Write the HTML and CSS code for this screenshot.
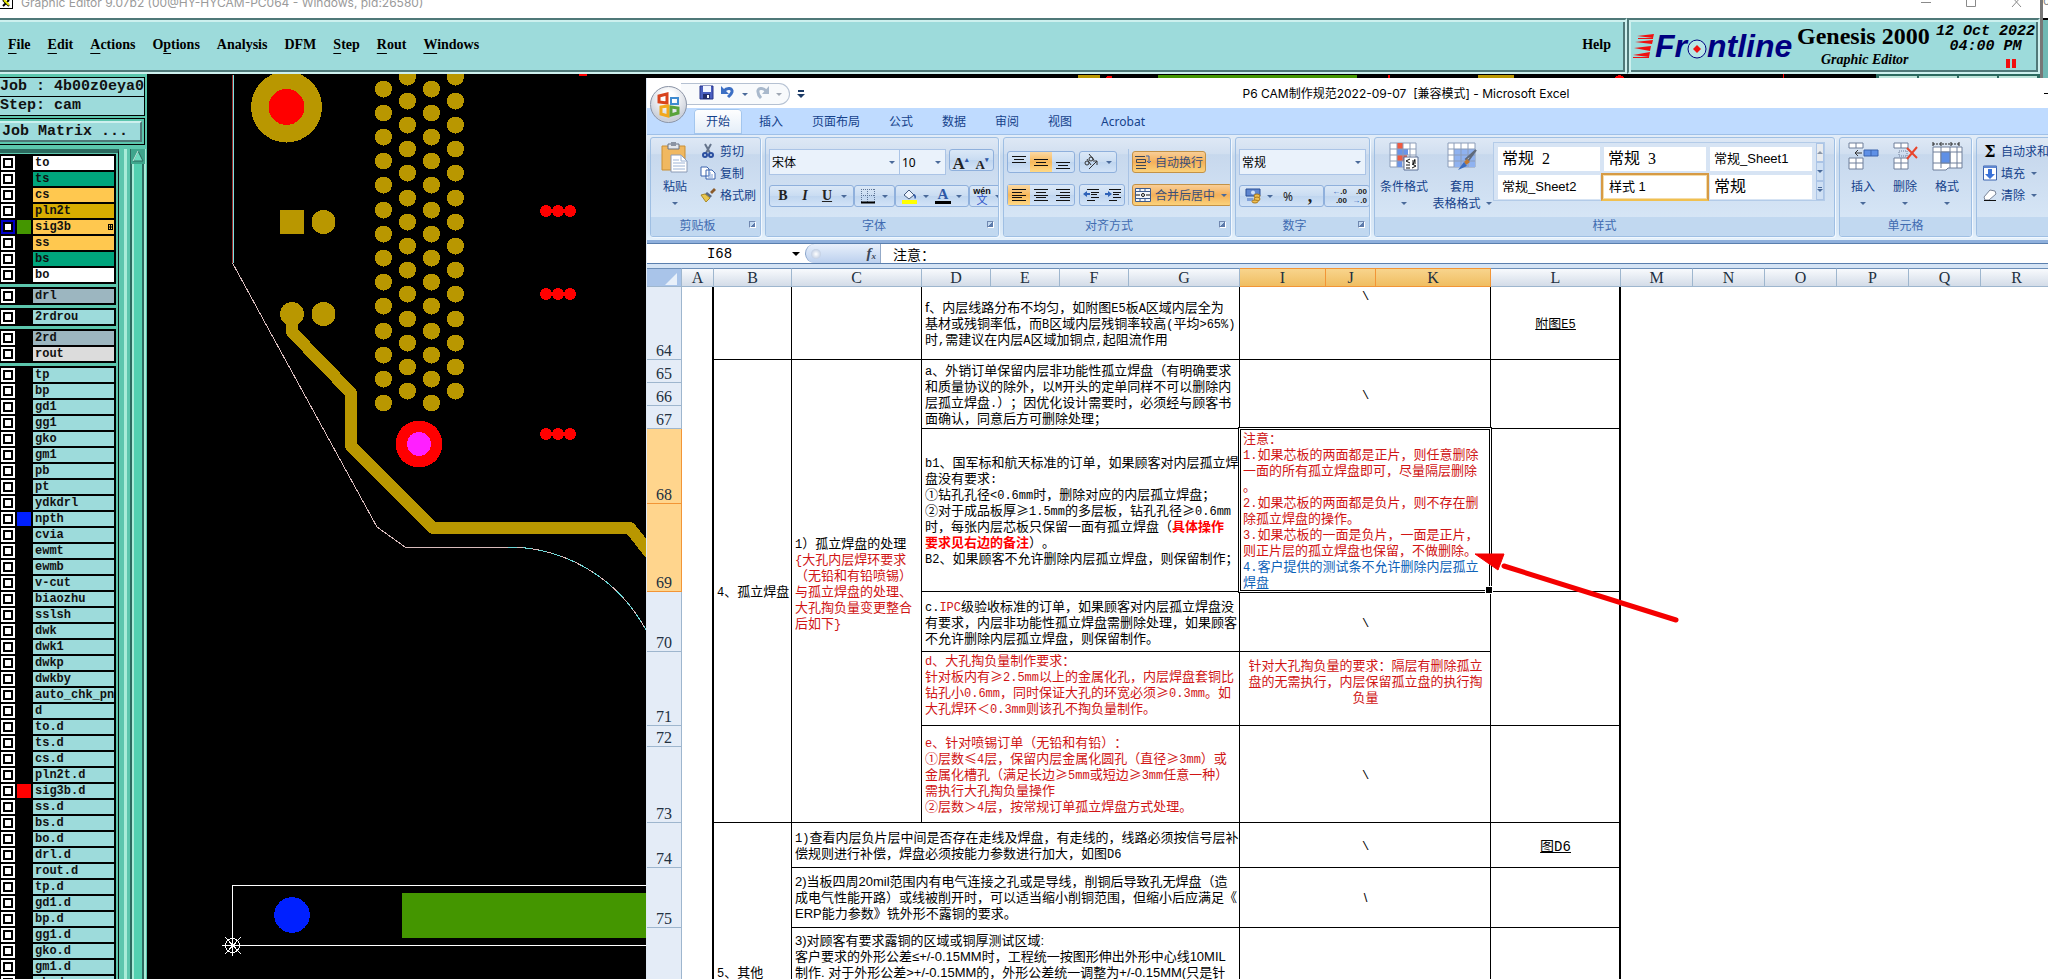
FILE: index.html
```html
<!DOCTYPE html>
<html lang="zh-CN">
<head>
<meta charset="utf-8">
<title>Graphic Editor</title>
<link rel="stylesheet" href="styles.css">
</head>
<body>
<div class="genesis">
  <header class="gtitle">
    <svg class="gicon" width="16" height="18" viewBox="0 0 16 18"><path d="M0 0H13V9H0Z" fill="#fff"/><path d="M0 9H13V0H12V8H0Z" fill="#000"/><path d="M3 0L9 6M9 0L3 6" stroke="#000" stroke-width="2"/><path d="M4 0L9 5" stroke="#e8e800" stroke-width="2"/></svg>
    <span class="gcaption">Graphic Editor 9.07b2 (00@HY-HYCAM-PC064 - Windows, pid:26580)</span>
    <svg class="gctl" width="120" height="18" viewBox="0 0 120 18" fill="none" stroke="#8a8a8a"><path d="M1 2.500H11M46.500 0V6.500H55.500V0M92 7L101 -3M101 7L92 -3"/></svg>
  </header>
  <div class="gbar">
    <nav class="gmenu">
      <a href="#"><u>F</u>ile</a><a href="#"><u>E</u>dit</a><a href="#"><u>A</u>ctions</a><a href="#">O<u>p</u>tions</a><a href="#">Analysis</a><a href="#">DFM</a><a href="#"><u>S</u>tep</a><a href="#"><u>R</u>out</a><a href="#"><u>W</u>indows</a>
      <a href="#" class="help">Help</a>
    </nav>
    <section class="brand">
      <div class="logo">
        <svg width="22" height="26" viewBox="0 0 22 26" fill="#f01010"><path d="M4 3L21 1L20 5ZM2 9L20 7L19 11ZM1 15L18 13L17 18ZM0 22L17 19L16 24ZM5 5H20V6H5ZM0 24H16V25H0Z"/></svg>
        <span class="front">Fr<svg width="20" height="20" viewBox="0 0 20 20"><circle cx="10" cy="10" r="9" fill="#b8e6e6" stroke="#000080"/><path d="M10 6L14 10L10 14L6 10Z" fill="#f01010"/></svg>ntline</span>
      </div>
      <div class="prod"><b>Genesis 2000</b><em>Graphic Editor</em></div>
      <div class="clock"><span>12 Oct 2022</span><span>04:00 PM</span><i></i></div>
    </section>
  </div>
  <div class="gmain">
    <aside class="side">
      <div class="jobs"><div>Job : 4b00z0eya0</div><div>Step: cam</div></div>
      <div class="matrix"><button>Job Matrix ...</button></div>
      <div class="lists">
        <div class="rows">
          <div class="grp">
            <label><input type="checkbox"><i></i><span class="w">to</span></label>
            <label><input type="checkbox"><i></i><span class="g">ts</span></label>
            <label><input type="checkbox"><i></i><span class="o">cs</span></label>
            <label><input type="checkbox"><i></i><span class="y">pln2t</span></label>
            <label><input type="checkbox" class="cur"><i class="green"></i><span class="o">sig3b<svg width="5" height="6" viewBox="0 0 5 6" fill="none" stroke="#000"><path d="M0 .5H5M0 3H5M0 5.500H5M.5 0V6M2.500 0V6M4.500 0V6"/></svg></span></label>
            <label><input type="checkbox"><i></i><span class="o">ss</span></label>
            <label><input type="checkbox"><i></i><span class="g">bs</span></label>
            <label><input type="checkbox"><i></i><span class="w">bo</span></label>
          </div>
          <div class="grp"><label><input type="checkbox"><i></i><span class="b">drl</span></label></div>
          <div class="grp"><label><input type="checkbox"><i></i><span>2rdrou</span></label></div>
          <div class="grp">
            <label><input type="checkbox"><i></i><span class="b">2rd</span></label>
            <label><input type="checkbox"><i></i><span class="l">rout</span></label>
          </div>
          <div class="grp">
            <label><input type="checkbox"><i></i><span>tp</span></label>
            <label><input type="checkbox"><i></i><span>bp</span></label>
            <label><input type="checkbox"><i></i><span>gd1</span></label>
            <label><input type="checkbox"><i></i><span>gg1</span></label>
            <label><input type="checkbox"><i></i><span>gko</span></label>
            <label><input type="checkbox"><i></i><span>gm1</span></label>
            <label><input type="checkbox"><i></i><span>pb</span></label>
            <label><input type="checkbox"><i></i><span>pt</span></label>
            <label><input type="checkbox"><i></i><span>ydkdrl</span></label>
            <label><input type="checkbox"><i class="blue"></i><span>npth</span></label>
            <label><input type="checkbox"><i></i><span>cvia</span></label>
            <label><input type="checkbox"><i></i><span>ewmt</span></label>
            <label><input type="checkbox"><i></i><span>ewmb</span></label>
            <label><input type="checkbox"><i></i><span>v-cut</span></label>
            <label><input type="checkbox"><i></i><span>biaozhu</span></label>
            <label><input type="checkbox"><i></i><span>sslsh</span></label>
            <label><input type="checkbox"><i></i><span>dwk</span></label>
            <label><input type="checkbox"><i></i><span>dwk1</span></label>
            <label><input type="checkbox"><i></i><span>dwkp</span></label>
            <label><input type="checkbox"><i></i><span>dwkby</span></label>
            <label><input type="checkbox"><i></i><span>auto_chk_pnl</span></label>
            <label><input type="checkbox"><i></i><span>d</span></label>
            <label><input type="checkbox"><i></i><span>to.d</span></label>
            <label><input type="checkbox"><i></i><span>ts.d</span></label>
            <label><input type="checkbox"><i></i><span>cs.d</span></label>
            <label><input type="checkbox"><i></i><span>pln2t.d</span></label>
            <label><input type="checkbox"><i class="red"></i><span>sig3b.d</span></label>
            <label><input type="checkbox"><i></i><span>ss.d</span></label>
            <label><input type="checkbox"><i></i><span>bs.d</span></label>
            <label><input type="checkbox"><i></i><span>bo.d</span></label>
            <label><input type="checkbox"><i></i><span>drl.d</span></label>
            <label><input type="checkbox"><i></i><span>rout.d</span></label>
            <label><input type="checkbox"><i></i><span>tp.d</span></label>
            <label><input type="checkbox"><i></i><span>gd1.d</span></label>
            <label><input type="checkbox"><i></i><span>bp.d</span></label>
            <label><input type="checkbox"><i></i><span>gg1.d</span></label>
            <label><input type="checkbox"><i></i><span>gko.d</span></label>
            <label><input type="checkbox"><i></i><span>gm1.d</span></label>
            <label><input type="checkbox"><i></i><span>pb.d</span></label>
          </div>
        </div>
        <div class="rail"><svg width="14" height="15" viewBox="0 0 14 15"><path d="M0 0H14V15H0Z" fill="#3fa58c"/><path d="M7 2L12 12H2Z" fill="#6fdcc0" stroke="#2c6a5f"/><path d="M7 2L2 12" stroke="#c8f5e6"/></svg></div>
      </div>
    </aside>
    <svg class="board" width="100%" height="100%" shape-rendering="crispEdges">
      <defs>
        <g id="col"><circle cy="14" r="8.500"/><circle cy="38" r="8.500"/><circle cy="62" r="8.500"/><circle cy="86" r="8.500"/><circle cy="110" r="8.500"/><circle cy="135" r="8.500"/><circle cy="159" r="8.500"/><circle cy="183" r="8.500"/><circle cy="207" r="8.500"/><circle cy="231" r="8.500"/><circle cy="256" r="8.500"/><circle cy="280" r="8.500"/><circle cy="304" r="8.500"/><circle cy="328" r="8.500"/></g>
        <g id="trio"><circle cx="546" cy="0" r="6"/><circle cx="558" cy="0" r="6"/><circle cx="570" cy="0" r="6"/></g>
      </defs>
      <g transform="translate(-147 -74)">
        <g fill="none">
          <path d="M232 75V263" stroke="#a03030"/><path d="M233 75V263" stroke="#7fe0e0"/>
          <path d="M232.500 263L269 330L377 527L405 547H508A156 156 0 0 1 640 620L650 636" stroke="#d8bcbc"/>
          <path d="M508 547A156 156 0 0 1 640 620L650 636" stroke="#6fd8d8" stroke-dasharray="9 6"/>
        </g>
        <g fill="#b99700">
          <circle cx="286.500" cy="107" r="35.500"/>
          <use href="#col" x="383.500" y="75"/><use href="#col" x="407.500" y="63"/><use href="#col" x="431.500" y="75"/><use href="#col" x="455.500" y="63"/>
          <rect x="280" y="210" width="24" height="24"/>
          <circle cx="323.500" cy="222" r="12"/><circle cx="292" cy="314" r="12"/><circle cx="323.500" cy="314" r="12"/>
        </g>
        <path d="M292 314V332L351 393V446L433 528H630L652 556" fill="none" stroke="#b99700" stroke-width="12" stroke-linejoin="round"/>
        <g fill="#f00">
          <circle cx="286.500" cy="107" r="18"/><circle cx="419" cy="444" r="23.500"/>
          <use href="#trio" y="211"/><use href="#trio" y="294"/><use href="#trio" y="434"/>
          <rect x="579" y="74" width="8" height="2"/>
          <path d="M1615 78A5 5 0 0 1 1624 78ZM1783 74H1784V78H1783ZM1107 76H1112V78H1105ZM1388 75H1390V78H1388Z"/>
        </g>
        <circle cx="419" cy="444" r="12" fill="#ff1fff"/>
        <path d="M1158 75H1357V78H1158ZM402 893H700V938H402Z" fill="#449600"/>
        <path d="M1078 75H1100V78H1078ZM1478 75H1514V78H1478Z" fill="#b99700"/>
        <path d="M1876 74H2040V78H1876Z" fill="#2c6a5f"/><path d="M1879 76H1917V78H1879ZM1919 76H1957V78H1919ZM1959 76H1997V78H1959ZM1999 76H2037V78H1999Z" fill="#bfe6dc"/>
        <circle cx="292" cy="915" r="17.800" fill="#0020ff"/>
        <g fill="none" stroke="#fff"><path d="M232.500 945V885.500H660M242 945.500H660"/><circle cx="232.500" cy="945.500" r="7"/><path d="M222 945.500H243M232.500 935V956M225 937L241 954M241 937L225 954"/></g>
      </g>
    </svg>
  </div>
</div>
<div class="behind"><span>o</span></div>

<main class="excel">
  <div class="xtitle">
    <div class="qat">
      <div class="pill">
        <button aria-label="保存"><svg width="15" height="15" viewBox="0 0 15 15"><path d="M1 1H14V14H1Z" fill="#4a5fc0" stroke="#27348b"/><path d="M4 1H12V7H4Z" fill="#f2f5ff"/><path d="M4 9H11V14H4Z" fill="#222c6b"/><path d="M8 10H10V13H8Z" fill="#fff"/></svg></button>
        <button aria-label="撤消"><svg width="14" height="14" viewBox="0 0 14 14" fill="none"><path d="M3 6C6 2 12 3 11 7C10 10 8 11 7 12" stroke="#3c6fc4" stroke-width="3"/><path d="M0 1V9H8Z" fill="#3c6fc4"/></svg></button>
        <i class="dn"></i>
        <button aria-label="恢复"><svg width="14" height="14" viewBox="0 0 14 14" fill="none"><path d="M11 6C8 2 2 3 3 7C3 10 5 12 6 13" stroke="#a9b9cc" stroke-width="3"/><path d="M14 1V9H7Z" fill="#a9b9cc"/></svg></button>
        <i class="dn pale"></i>
      </div>
      <svg width="8" height="8" viewBox="0 0 8 8" fill="#1d3b66"><path d="M1 0H7V2H1ZM0 4H8L4 8Z"/></svg>
    </div>
    <h1>P6 CAM制作规范2022-09-07&nbsp; [兼容模式] - Microsoft Excel</h1>
    <div class="xctl"><i></i></div>
  </div>
  <button class="office" aria-label="Office 按钮"><svg width="24" height="26" viewBox="0 0 24 26" fill="none" stroke-width="3"><path d="M2 4L10 2V11L2 10Z" stroke="#d8421c"/><path d="M14 6H21V12H14Z" stroke="#3f8bd0" stroke-width="2"/><path d="M4 15L11 14V24L4 22Z" stroke="#f2a81d"/><path d="M14 15L21 16V21L14 23Z" stroke="#5aa33a"/></svg></button>
  <nav class="tabs"><a href="#" class="on">开始</a><a href="#">插入</a><a href="#">页面布局</a><a href="#">公式</a><a href="#">数据</a><a href="#">审阅</a><a href="#">视图</a><a href="#">Acrobat</a></nav>

  <div class="ribbon">
    <section class="rg clip">
      <div class="rb">
        <button class="big"><svg width="28" height="32" viewBox="0 0 28 32"><path d="M1 4H24V28H1Z" fill="#f0b860" stroke="#c98f35"/><path d="M7 2H18V7H7Z" fill="#e4e7ec" stroke="#6a7382"/><path d="M10 0H15V4H10Z" fill="#8a93a3"/><path d="M10 13H20L26 19V30H10Z" fill="#fff" stroke="#8c9bb5"/><path d="M20 13V19H26M12 18H18M12 21H24M12 24H24M12 27H24" fill="none" stroke="#9db4d6"/></svg><span>粘贴</span><i class="dn"></i></button>
        <div class="list">
          <button><svg width="16" height="16" viewBox="0 0 16 16" fill="none"><path d="M5 1L10 10M11 1L6 10" stroke="#66758c" stroke-width="2"/><circle cx="5" cy="12" r="2" stroke="#2b4fa0" stroke-width="2"/><circle cx="11" cy="12" r="2" stroke="#2b4fa0" stroke-width="2"/></svg>剪切</button>
          <button><svg width="16" height="16" viewBox="0 0 16 16" fill="#fff" stroke="#3a62ad"><path d="M1 2H7L9 4V11H1ZM6 5H12L15 8V14H6Z"/><path d="M8 8H11M8 10H13M8 12H13" stroke="#7d9fd8"/></svg>复制</button>
          <button><svg width="16" height="16" viewBox="0 0 16 16"><path d="M10 5L14 1L16 3L12 7Z" fill="#8a5a2a"/><path d="M7 5L12 9L10 11L5 7Z" fill="#5a6a84"/><path d="M5 7L10 11L6 15L1 8Z" fill="#e9c64e" stroke="#a88a2a"/></svg>格式刷</button>
        </div>
      </div>
      <footer class="fl">剪贴板<i class="launch"></i></footer>
    </section>

    <section class="rg font">
      <div class="rb col">
        <div class="ln tall">
          <label class="cb wide"><select aria-label="字体"><option>宋体</option></select></label><label class="cb"><select aria-label="字号"><option>10</option></select></label>
          <div class="seg push top"><button class="ser">A<sup>▴</sup></button><button class="ser sm">A<sup>▾</sup></button></div>
        </div>
        <div class="ln spread">
          <div class="seg"><button class="ser">B</button><button class="ser it">I</button><button class="ser un">U</button><i class="dn"></i></div>
          <div class="seg"><button aria-label="边框"><svg width="16" height="16" viewBox="0 0 16 16" fill="none" stroke="#5d7597"><path d="M1 1.500H15M1 7.500H15M1.500 1V14M7.500 1V14M14.500 1V14" stroke-dasharray="1 1"/><path d="M1 14.500H15" stroke="#000" stroke-width="2"/></svg></button><i class="dn"></i></div>
          <div class="seg"><button aria-label="填充颜色"><svg width="17" height="17" viewBox="0 0 17 17"><path d="M3 7L8 2L13 7L8 11Z" fill="#eef4fc" stroke="#42597d"/><path d="M13 6C16 7 15 11 14 11C13 10 14 8 12 7Z" fill="#2e58a6"/><path d="M1 12H16V16H1Z" fill="#ff0"/></svg></button><i class="dn"></i><button aria-label="字体颜色" class="ser fc">A</button><i class="dn"></i></div>
          <div class="seg"><button class="wen" aria-label="拼音"><small>wén</small><span>文</span></button><i class="dn"></i></div>
        </div>
      </div>
      <footer class="fl">字体<i class="launch"></i></footer>
    </section>

    <section class="rg align">
      <div class="rb two">
        <div class="stack">
          <div class="ln">
            <div class="seg"><button aria-label="顶端对齐"><svg width="14" height="14" viewBox="0 0 14 14"><path d="M0 1.500H14M2 4.500H12M0 7.500H14" stroke="#111"/></svg></button><button class="hot" aria-label="垂直居中"><svg width="14" height="14" viewBox="0 0 14 14"><path d="M0 4.500H14M2 7.500H12M0 10.500H14" stroke="#111"/></svg></button><button aria-label="底端对齐"><svg width="14" height="14" viewBox="0 0 14 14"><path d="M0 7.500H14M2 10.500H12M0 13.500H14" stroke="#111"/></svg></button></div>
            <div class="seg"><button aria-label="方向"><svg width="16" height="16" viewBox="0 0 16 16" fill="none" stroke="#333"><circle cx="4" cy="9" r="2"/><path d="M4 5L8 11"/><circle cx="8" cy="5" r="2"/><path d="M6 0L11 6M6 15L14 7M14 11V7H10"/></svg></button><i class="dn"></i></div>
          </div>
          <div class="ln">
            <div class="seg"><button class="hot" aria-label="左对齐"><svg width="14" height="12" viewBox="0 0 14 12"><path d="M0 .5H14M0 3.500H10M0 6.500H14M0 8.500H10M0 11.500H14" stroke="#111"/></svg></button><button aria-label="居中"><svg width="14" height="12" viewBox="0 0 14 12"><path d="M0 .5H14M2 3.500H12M0 6.500H14M2 8.500H12M0 11.500H14" stroke="#111"/></svg></button><button aria-label="右对齐"><svg width="14" height="12" viewBox="0 0 14 12"><path d="M0 .5H14M4 3.500H14M0 6.500H14M4 8.500H14M0 11.500H14" stroke="#111"/></svg></button></div>
            <div class="seg"><button aria-label="减少缩进"><svg width="16" height="14" viewBox="0 0 16 14"><path d="M4 1.500H16M8 4.500H16M8 6.500H14M8 9.500H16M4 12.500H12" stroke="#111"/><path d="M0 6L4 3V5H7V7H4V9Z" fill="#2e62b8"/></svg></button><button aria-label="增加缩进"><svg width="16" height="14" viewBox="0 0 16 14"><path d="M4 1.500H16M8 4.500H16M8 6.500H14M8 9.500H16M4 12.500H12" stroke="#111"/><path d="M7 6L3 3V5H0V7H3V9Z" fill="#2e62b8"/></svg></button></div>
          </div>
        </div>
        <div class="stack tight">
          <button class="hotbtn"><svg width="16" height="16" viewBox="0 0 16 16" fill="none" stroke="#3c4656"><path d="M0 2.500H10M1.500 5.500H10.500V8.500H1.500ZM1 11.500H11M1 14.500H11"/><path d="M11 2H14V9L12 7M14 9L16 7" stroke="#3a62ad"/></svg>自动换行</button>
          <button class="hotbtn"><svg width="16" height="16" viewBox="0 0 16 16"><path d="M.5 1.500H15.500V14.500H.5ZM.5 4.500H15.500M.5 11.500H15.500M5 1V5M10 1V5M5 11V15M10 11V15" fill="#f4f7fb" stroke="#3c5a8c"/><path d="M1 8H5M11 8H15" stroke="#111"/><circle cx="8" cy="8" r="1.500" fill="none" stroke="#111"/></svg>合并后居中<i class="dn"></i></button>
        </div>
      </div>
      <footer class="fl">对齐方式<i class="launch"></i></footer>
    </section>

    <section class="rg num">
      <div class="rb col">
        <div class="ln tall"><label class="cb wide"><select aria-label="数字格式"><option>常规</option></select></label></div>
        <div class="ln spread">
          <div class="seg"><button aria-label="会计数字格式"><svg width="17" height="16" viewBox="0 0 17 16"><path d="M1 1H15V8H1Z" fill="#5f86cf" stroke="#2b4f95"/><circle cx="8" cy="4.500" r="2" fill="#cfe0fa"/><path d="M2 10H8V13H2Z" fill="#7fa0d8"/><ellipse cx="12" cy="8" rx="3" ry="2" fill="#f0c050" stroke="#a87820"/><ellipse cx="12" cy="11" rx="3" ry="2" fill="#f0c050" stroke="#a87820"/><ellipse cx="10" cy="13.500" rx="3" ry="1.500" fill="#f0c050" stroke="#a87820"/></svg></button><i class="dn"></i><button class="pc">%</button><button class="ser comma">,</button></div>
          <div class="seg"><button class="dec"><span><b>←</b>.0</span><span>.00</span></button><button class="dec"><span>.00</span><span><b>→</b>.0</span></button></div>
        </div>
      </div>
      <footer class="fl">数字<i class="launch"></i></footer>
    </section>

    <section class="rg styles">
      <div class="rb">
        <button class="big"><svg width="32" height="29" viewBox="0 0 32 29"><path d="M2 1H28V25H2Z" fill="#fff" stroke="#8b9cb8"/><path d="M9 1H15V7H9ZM9 13H19V19H9Z" fill="#f05a40"/><path d="M9 7H20V13H9ZM9 19H14V25H9Z" fill="#6a94e8"/><path d="M2 7H28M2 13H28M2 19H28M9 1V25M15 1V25M22 1V25" stroke="#8b9cb8" fill="none"/><path d="M16 15H30V28H16Z" fill="#fff" stroke="#5b6f94"/><path d="M22 17L18 19L22 21M24 19H28M24 21H28M27 17L25 23M18 23H22M18 26H22M24 22L28 24L24 26" stroke="#111" fill="none"/></svg><span>条件格式</span><i class="dn"></i></button>
        <button class="big"><svg width="32" height="29" viewBox="0 0 32 29"><path d="M2 1H29V25H2Z" fill="#fff" stroke="#8b9cb8"/><path d="M8 7H29V25H8Z" fill="#8fb2f0"/><path d="M2 7H29M2 13H29M2 19H29M8 1V25M15 1V25M22 1V25" stroke="#8b9cb8" fill="none"/><path d="M30 8L22 19L20 17Z" fill="#fff" stroke="#5f6a7c" stroke-width="2"/><path d="M21 17L24 20L20 23L18 20Z" fill="#c07830"/><path d="M18 20L21 24L12 28Z" fill="#3a6cc0"/></svg><span>套用<br>表格格式<i class="dn"></i></span></button>
        <div class="gallery">
          <button class="s16">常规&nbsp; 2</button><button class="s16">常规&nbsp; 3</button><button>常规_Sheet1</button>
          <button>常规_Sheet2</button><button class="sel">样式 1</button><button class="s16">常规</button>
          <div class="gs"><button aria-label="上一行"><i class="up"></i></button><button aria-label="下一行"><i class="dn"></i></button><button aria-label="其他"><i class="dn more"></i></button></div>
        </div>
      </div>
      <footer>样式</footer>
    </section>

    <section class="rg cells">
      <div class="rb">
        <button class="big"><svg width="32" height="29" viewBox="0 0 32 29" fill="#fff" stroke="#6f7f9a"><path d="M2 1H16V6H2ZM2 16H16V27H2ZM2 21H16M9 1V6M9 16V27"/><path d="M17 8H31V14H17Z" fill="#5f90e6" stroke="#3a62ad"/><path d="M24 8V14" stroke="#3a62ad"/><path d="M15 11H8M11 8L8 11L11 14" fill="none" stroke="#333"/></svg><span>插入</span><i class="dn"></i></button>
        <button class="big"><svg width="32" height="29" viewBox="0 0 32 29" fill="#fff" stroke="#6f7f9a"><path d="M5 1H19V6H5ZM5 16H19V27H5ZM5 21H19M12 1V6M12 16V27"/><path d="M10 9H18V14H10Z" fill="none" stroke-dasharray="1 1"/><path d="M18 6L28 16M28 5L18 17" stroke="#e8452c" stroke-width="2"/></svg><span>删除</span><i class="dn"></i></button>
        <button class="big"><svg width="32" height="29" viewBox="0 0 32 29" fill="#fff" stroke="#6f7f9a"><path d="M2 2H28" stroke="#222" stroke-dasharray="2 1"/><path d="M2 0V4M28 0V4M10 0V4M20 0V4" stroke="#222"/><path d="M2 5H31V26H17L15 28H2ZM2 10H31M2 21H31M10 5V26M19 5V26M26 5V26"/><path d="M10 10H19V21H10Z" fill="#5f90e6"/></svg><span>格式</span><i class="dn"></i></button>
      </div>
      <footer>单元格</footer>
    </section>

    <section class="rg edit">
      <div class="rb">
        <div class="list">
          <button><b class="sigma">Σ</b>自动求和</button>
          <button><svg width="14" height="16" viewBox="0 0 14 16"><path d="M.5 1H13.500V15H.5Z" fill="#fff" stroke="#3a62ad"/><path d="M.5 1H13.500V3H.5Z" fill="#5f86cf"/><path d="M5 4H9V9H12L7 14L2 9H5Z" fill="#3a72d8"/></svg>填充<i class="dn"></i></button>
          <button><svg width="14" height="14" viewBox="0 0 14 14"><path d="M1 9L7 2L12 3L13 6L6 12L2 12Z" fill="#fff" stroke="#7a8598"/><path d="M1 12.500H13" stroke="#111"/></svg>清除<i class="dn"></i></button>
        </div>
      </div>
      <footer></footer>
    </section>
  </div>

  <div class="fbar">
    <input class="nbox" aria-label="名称框" value="I68">
    <i class="dn blk"></i>
    <div class="fx"><i></i><em>f<sub>x</sub></em></div>
    <input class="fin" aria-label="编辑栏" value="注意：">
  </div>

  <div class="sheet">
    <table>
      <colgroup><col class="c0"><col class="ca"><col class="cbb"><col class="cc"><col class="cd"><col class="cd"><col class="cd"><col class="cg"><col class="ci"><col class="cj"><col class="ck"><col class="cc"><col class="cm"><col class="cm"><col class="cm"><col class="cm"><col class="cm"><col class="cm"></colgroup>
      <thead><tr><th class="corner"><i></i></th><th>A</th><th>B</th><th>C</th><th>D</th><th>E</th><th>F</th><th>G</th><th class="act">I</th><th class="act">J</th><th class="act">K</th><th>L</th><th>M</th><th>N</th><th>O</th><th>P</th><th>Q</th><th>R</th></tr></thead>
      <tbody>
        <tr class="h73"><th>64</th><td class="a"></td><td></td><td></td>
          <td colspan="4">f、内层线路分布不均匀，如附图<s>E5</s>板<s>A</s>区域内层全为<br>基材或残铜率低，而<s>B</s>区域内层残铜率较高<s>(</s>平均<s>&gt;65%)</s><br>时<s>,</s>需建议在内层<s>A</s>区域加铜点<s>,</s>起阻流作用</td>
          <td colspan="3" class="mid topv"><s>\</s></td><td class="mid last"><u>附图<s>E5</s></u></td><td class="out" colspan="6"></td></tr>
        <tr class="h23"><th>65</th><td class="a"></td><td rowspan="9" class="mid"><s>4</s>、孤立焊盘</td>
          <td rowspan="9"><s>1</s>）孤立焊盘的处理<br><span class="r"><s>{</s>大孔内层焊环要求<br>（无铅和有铅喷锡）<br>与孤立焊盘的处理、<br>大孔掏负量变更整合<br>后如下<s>}</s></span><br><br></td>
          <td colspan="4" rowspan="3"><s>a</s>、外销订单保留内层非功能性孤立焊盘（有明确要求<br>和质量协议的除外，以<s>M</s>开头的定单同样不可以删除内<br>层孤立焊盘<s>.</s>）；因优化设计需要时，必须经与顾客书<br>面确认，同意后方可删除处理；</td>
          <td colspan="3" rowspan="3" class="mid"><s>\</s></td><td rowspan="3" class="last"></td><td class="out" colspan="6"></td></tr>
        <tr class="h23"><th>66</th><td class="a"></td><td class="out" colspan="6"></td></tr>
        <tr class="h23"><th>67</th><td class="a"></td><td class="out" colspan="6"></td></tr>
        <tr class="h75"><th class="act">68</th><td class="a"></td>
          <td colspan="4" rowspan="2"><s>b1</s>、国军标和航天标准的订单，如果顾客对内层孤立焊<br>盘没有要求<s>:</s><br>①钻孔孔径<s>&lt;0.6mm</s>时，删除对应的内层孤立焊盘；<br>②对于成品板厚≥<s>1.5mm</s>的多层板，钻孔孔径≥<s>0.6mm</s><br>时，每张内层芯板只保留一面有孤立焊盘（<b>具体操作<br>要求见右边的备注</b>）。<br><s>B2</s>、如果顾客不允许删除内层孤立焊盘，则保留制作；</td>
          <td colspan="3" rowspan="2" class="r picked">注意：<br><s>1.</s>如果芯板的两面都是正片，则任意删除<br>一面的所有孤立焊盘即可，尽量隔层删除<br>。<br><s>2.</s>如果芯板的两面都是负片，则不存在删<br>除孤立焊盘的操作。<br><s>3.</s>如果芯板的一面是负片，一面是正片，<br>则正片层的孤立焊盘也保留，不做删除。<br><span class="bl"><s>4.</s>客户提供的测试条不允许删除内层孤立<br>焊盘</span></td>
          <td rowspan="2" class="last"></td><td class="out" colspan="6"></td></tr>
        <tr class="h88"><th class="act">69</th><td class="a"></td><td class="out" colspan="6"></td></tr>
        <tr class="h60"><th>70</th><td class="a"></td>
          <td colspan="4"><s>c.</s><span class="r"><s>IPC</s></span>级验收标准的订单，如果顾客对内层孤立焊盘没<br>有要求，内层非功能性孤立焊盘需删除处理，如果顾客<br>不允许删除内层孤立焊盘，则保留制作。</td>
          <td colspan="3" class="mid"><s>\</s></td><td rowspan="2" class="last"></td><td class="out" colspan="6"></td></tr>
        <tr class="h74"><th>71</th><td class="a"></td>
          <td colspan="4" class="r topv"><s>d</s>、大孔掏负量制作要求：<br>针对板内有≥<s>2.5mm</s>以上的金属化孔，内层焊盘套铜比<br>钻孔小<s>0.6mm</s>，同时保证大孔的环宽必须≥<s>0.3mm</s>。如<br>大孔焊环＜<s>0.3mm</s>则该孔不掏负量制作。</td>
          <td colspan="3" class="r mid topv pad">针对大孔掏负量的要求：隔层有删除孤立<br>盘的无需执行，内层保留孤立盘的执行掏<br>负量</td><td class="out" colspan="6"></td></tr>
        <tr class="h21"><th>72</th><td class="a"></td>
          <td colspan="4" rowspan="2" class="r"><s>e</s>、针对喷锡订单（无铅和有铅）：<br>①层数≤<s>4</s>层，保留内层金属化圆孔（直径≥<s>3mm</s>）或<br>金属化槽孔（满足长边≥<s>5mm</s>或短边≥<s>3mm</s>任意一种）<br>需执行大孔掏负量操作<br>②层数＞<s>4</s>层，按常规订单孤立焊盘方式处理。</td>
          <td colspan="3" rowspan="2" class="mid"><s>\</s></td><td rowspan="2" class="last"></td><td class="out" colspan="6"></td></tr>
        <tr class="h76"><th>73</th><td class="a"></td><td class="out" colspan="6"></td></tr>
        <tr class="h45"><th>74</th><td class="a"></td><td rowspan="4"><s>5</s>、其他</td>
          <td colspan="5"><s>1)</s>查看内层负片层中间是否存在走线及焊盘，有走线的，线路必须按信号层补<br>偿规则进行补偿，焊盘必须按能力参数进行加大，如图<s>D6</s></td>
          <td colspan="3" class="mid"><s>\</s></td><td class="mid last big14"><u>图<s>D6</s></u></td><td class="out" colspan="6"></td></tr>
        <tr class="h60"><th>75</th><td class="a"></td>
          <td colspan="5" class="ar">2)当板四周20mil范围内有电气连接之孔或是导线，削铜后导致孔无焊盘（造<br>成电气性能开路）或线被削开时，可以适当缩小削铜范围，但缩小后应满足《<br>ERP能力参数》铣外形不露铜的要求。</td>
          <td colspan="3" class="mid ar">\</td><td class="last"></td><td class="out" colspan="6"></td></tr>
        <tr class="h112"><th>76</th><td class="a"></td>
          <td colspan="5" class="ar topv pad">3)对顾客有要求露铜的区域或铜厚测试区域:<br>客户要求的外形公差≤+/-0.15MM时，工程统一按图形伸出外形中心线10MIL<br>制作. 对于外形公差&gt;+/-0.15MM的，外形公差统一调整为+/-0.15MM(只是针</td>
          <td colspan="3" class="mid ar">\</td><td class="mid last big14"><u>图</u></td><td class="out" colspan="6"></td></tr>
        <tr class="h81"><th>77</th><td class="a"></td><td colspan="5"></td><td colspan="3"></td><td class="last"></td><td class="out" colspan="6"></td></tr>
      </tbody>
    </table>
  </div>
  <svg class="arrow" width="220" height="90" viewBox="0 0 220 90"><path d="M32 18L204 72" stroke="#f40000" stroke-width="5" stroke-linecap="round"/><path d="M3 6L32 6L26 22Z" fill="#f40000" stroke="#f40000"/></svg>
</main>
</body>
</html>
```

FILE: styles.css
```css
* { box-sizing: border-box; }
html, body { height: 100%; margin: 0; }
body { position: relative; overflow: hidden; background: #000; font-family: "Noto Sans", "Noto Sans CJK SC", sans-serif; font-size: 12px; }
a { color: inherit; text-decoration: none; }
button { margin: 0; padding: 0; border: 0; background: none; color: inherit; font: inherit; }
i, em { font-style: normal; }
svg { flex: none; }

/* ---------- Genesis window ---------- */
.genesis { display: flex; flex-direction: column; height: 100%; margin-right: 8px; }
.gtitle { display: flex; height: 18px; background: #fff; flex: none; overflow: hidden; }
.gcaption { flex: 1; margin: -6px 0 0 5px; line-height: 18px; font-size: 12px; font-family: Inter, sans-serif; color: #9a9a9a; }
.gbar { display: flex; height: 56px; flex: none; }
.gmenu, .brand { border: 2px solid; border-color: #4f7878 #cdf0ee #cdf0ee #4f7878; box-shadow: inset 2px 2px 0 #cdf0ee, inset -2px -2px 0 #4f7878; background: #9ddbdb; }
.gmenu { flex: 1; display: flex; align-items: center; gap: 17px; margin-left: -4px; padding: 0 14px 2px 10px; font: bold 14px "Liberation Serif", serif; color: #000; }
.gmenu u { text-decoration-thickness: 1px; text-underline-offset: 4px; }
.gmenu .help { margin-left: auto; }
.brand { width: 413px; display: flex; }
.logo { display: flex; align-items: center; width: 166px; padding: 0 0 0 4px; }
.front { font: italic bold 32px "Liberation Sans", sans-serif; color: #000080; white-space: nowrap; }
.front svg { vertical-align: -2px; }
.prod { display: flex; flex-direction: column; width: 138px; padding: 2px 0 0 2px; font-family: "Liberation Serif", serif; color: #000; white-space: nowrap; }
.prod b { font-size: 24px; line-height: 28px; }
.prod em { font: italic bold 14px/20px "Liberation Serif", serif; padding-left: 24px; }
.clock { display: flex; flex-direction: column; align-items: center; flex: 1; padding-top: 4px; font: italic bold 15px/15px "Liberation Mono", monospace; white-space: nowrap; }
.clock i { width: 10px; height: 9px; margin: 5px 0 0 50px; border: solid #f01010; border-width: 0 4px; }
.gmain { flex: 1; min-height: 0; display: flex; background: #000; }
.board { display: block; flex: 1; min-width: 0; }
.behind { position: absolute; top: 0; right: 0; width: 8px; height: 78px; background: linear-gradient(#fff 18px, #000 18px 20px, #6fb8b4 20px); border-left: 3px solid #777; overflow: hidden; }
.behind span { position: relative; top: -8px; color: #888; }

/* layer list */
.side { width: 147px; flex: none; display: flex; flex-direction: column; background: #5cc6ad; font: bold 15px "Liberation Mono", monospace; color: #111; }
.jobs { margin: 3px 2px 0 0; border: 1px solid #000; border-left: 0; background: #9ddbdb; }
.jobs div { height: 18px; line-height: 18px; white-space: pre; }
.jobs div + div { border-top: 1px solid #000; height: 19px; }
.matrix { margin: 2px 2px 0 0; padding: 2px 2px 2px 0; border: 1px solid #000; border-left: 0; }
.matrix button { display: block; width: 100%; height: 21px; padding-left: 2px; text-align: left; background: #9ddbdb; border: 2px solid; border-color: #cdf0ee #4f7878 #4f7878 #9ddbdb; border-left: 0; line-height: 17px; }
.lists { display: flex; flex: 1; min-height: 0; margin-top: 4px; }
.rows { width: 119px; flex: none; overflow: hidden; border-top: 4px solid #2c6a5f; border-right: 1px solid #111; font-size: 12px; padding: 1px 2px 0 0; display: flex; flex-direction: column; gap: 3px; }
.grp { background: #000; padding: 2px 2px 0 1px; flex: none; }
.grp label { display: flex; gap: 2px; height: 16px; }
.grp input { appearance: none; margin: 0; width: 14px; height: 14px; border: 2px solid #fff; background: #fff; box-shadow: inset 0 0 0 2px #000; }
.grp input.cur { border-color: #0000c8; }
.grp label i { width: 14px; height: 14px; }
.grp i.green { background: #449600; }
.grp i.blue { background: #0020ff; }
.grp i.red { background: #f00; }
.grp span { flex: 1; min-width: 0; height: 14px; padding: 0 1px 0 2px; line-height: 14px; background: #9ddbdb; overflow: hidden; white-space: nowrap; display: flex; justify-content: space-between; align-items: center; }
.grp .w { background: #fff; } .grp .g { background: #00a57d; } .grp .o { background: #ffc84f; } .grp .y { background: #d8ad00; } .grp .b { background: #9cb6c0; } .grp .l { background: #dcdcdc; }
.rail { flex: 1; padding-left: 12px; background: linear-gradient(90deg, #5cc6ad 5px, #a8ecd8 5px 8px, #5cc6ad 8px 11px, #2c6a5f 11px 13px, #a8ecd8 13px 15px, #53d0b0 15px 23px, #2c6a5f 23px 25px, #a8ecd8 25px 27px, #5cc6ad 27px); }

/* ---------- Excel window ---------- */
.excel { position: absolute; left: 646px; top: 78px; right: 0; bottom: 0; display: flex; flex-direction: column; background: #fff; border-left: 1px solid #dfe9f5; overflow: hidden; color: #15428b; }
.xtitle { height: 30px; flex: none; display: flex; color: #000; }
.qat { width: 199px; flex: none; display: flex; gap: 7px; align-items: center; padding: 2px 0 0 34px; }
.pill { display: flex; align-items: center; gap: 7px; height: 22px; width: 109px; padding-left: 18px; border: 1px solid #b5c1d2; border-left: 0; border-radius: 0 11px 11px 0; background: #f8fafc; }
.xtitle h1 { flex: 1; margin: 0; font: 12px/32px Inter, "Noto Sans CJK SC", sans-serif; text-align: center; white-space: nowrap; }
.xctl { width: 82px; display: flex; justify-content: flex-end; align-items: center; }
.xctl i { width: 4px; height: 1px; background: #000; }
.office { position: absolute; left: 3px; top: 8px; width: 37px; height: 37px; border-radius: 50%; border: 1px solid #8a93a5; background: radial-gradient(circle at 50% 30%, #fff 20%, #c9ced8 75%, #eef1f6); display: grid; place-items: center; z-index: 2; }
.dn { flex: none; width: 0; height: 0; border: 3px solid transparent; border-top-color: #4a6a9a; border-bottom: 0; }
.dn.pale { border-top-color: #a0a8b4; }
.dn.blk { border-width: 4px; border-top-color: #000; border-bottom: 0; }
.up { width: 0; height: 0; border: 3px solid transparent; border-bottom-color: #8a96a8; border-top: 0; }

.tabs { height: 26px; flex: none; display: flex; gap: 5px; padding-left: 47px; background: #bfdbff; font-size: 12px; color: #15428b; }
.tabs a { padding: 0 12px; line-height: 28px; }
.tabs .on { margin-top: 1px; line-height: 26px; background: linear-gradient(#fff, #e3edf8); border-radius: 4px 4px 0 0; box-shadow: inset 0 0 0 1px #a3c6ee; }

.ribbon { flex: none; display: flex; gap: 4px; height: 109px; padding: 2px 0 3px 3px; background: linear-gradient(#e3edf8, #d3e1f0 15%, #c8d9ed 20%, #d9e8f6 90%, #e6f2fc); border-top: 1px solid #9fc0e8; border-bottom: 3px solid #8fb0dc; }
.rg { display: flex; flex-direction: column; flex: none; border: 1px solid #9fbfe3; border-radius: 3px; background: linear-gradient(#dee8f5, #d1dff0 16%, #c7d8ed 17%, #dae9f8); box-shadow: 1px 1px 0 #f2f8ff; overflow: hidden; height: 100%; }
.clip { width: 111px; } .font { width: 234px; } .align { width: 228px; } .num { width: 135px; } .styles { width: 461px; } .cells { width: 133px; } .edit { flex: 1 0 80px; }
.rb { flex: 1; min-height: 0; display: flex; padding: 4px 3px 0; }
.rg footer { position: relative; height: 19px; flex: none; background: #c1d8f0; text-align: center; line-height: 18px; color: #3f6bb0; }
.rg .fl { padding-right: 16px; }
.launch { position: absolute; right: 4px; top: 4px; width: 7px; height: 7px; border: 1px solid #7088b0; border-right-color: #fff; border-bottom-color: #fff; background: linear-gradient(135deg, transparent 50%, #5d7bab 50%); }
.big { display: flex; flex-direction: column; align-items: center; width: 42px; line-height: 17px; white-space: nowrap; }
.big span { margin-top: 7px; }
.big > .dn { margin-top: 7px; }
.big span .dn { display: inline-block; vertical-align: 3px; margin-left: 5px; }
.clip .big span { margin-top: 4px; }
.list { display: flex; flex-direction: column; padding-left: 4px; }
.list button { display: flex; align-items: center; gap: 4px; height: 22px; margin-top: -2px; margin-bottom: 2px; white-space: nowrap; text-align: left; }
.list .dn { margin-left: 2px; }
.edit .rb { padding-left: 6px; }
.edit .list { padding-left: 0; }
.sigma { width: 14px; text-align: center; color: #000; font: bold 16px "DejaVu Serif", serif; }
.rb.col { flex-direction: column; gap: 10px; padding-top: 11px; }
.ln { display: flex; gap: 4px; height: 22px; }
.ln.tall { height: 26px; gap: 0; }
.ln.spread { justify-content: space-between; gap: 0; }
.cb { position: relative; width: 46px; height: 26px; border: 1px solid #abc4e6; background: #eaf2fb; color: #000; }
.cb + .cb { border-left: 0; }
.cb.wide { width: 131px; }
.num .cb.wide { width: 100%; }
.cb select { appearance: none; width: 100%; height: 100%; border: 0; padding: 0 2px; background: none; font: 12px "Noto Sans", "Noto Sans CJK SC", sans-serif; color: #000; }
.cb::after { content: ""; position: absolute; right: 4px; top: 11px; border: 3px solid transparent; border-top-color: #4a6a9a; border-bottom: 0; }
.seg { display: flex; align-items: center; height: 22px; padding: 0 2px; border: 1px solid #8fb0dc; border-radius: 3px; background: linear-gradient(#dbe8f7, #c9dcf2 50%, #bfd5ef 51%, #d2e3f7); }
.seg button { width: 22px; height: 20px; display: grid; place-items: center; }
.seg .dn { margin: 0 4px 0 3px; }
.push { margin-left: 3px; width: 45px; padding: 0; }
.ser { font: bold 14px "Liberation Serif", serif; color: #222; }
.ser sup { font-size: 7px; color: #2e58a6; vertical-align: 7px; }
.seg.push .ser { display: block; font-size: 17px; line-height: 20px; }
.seg.push .sm { font-size: 13px; }
.it { font-style: italic; } .un { text-decoration: underline; }
.seg .fc { color: #2e58a6; font-size: 15px; line-height: 13px; align-content: start; border-bottom: 3px solid #000; width: 16px; height: 16px; margin: 0 2px; }
.seg .wen { display: flex; flex-direction: column; align-items: center; justify-content: center; color: #2a50c8; font-size: 11px; line-height: 10px; width: 20px; }
.wen small { color: #111; font: bold 9px/8px "Liberation Sans", sans-serif; }
.rb.two { padding-top: 13px; }
.stack { display: flex; flex-direction: column; gap: 11px; }
.stack .seg { padding: 0; }
.stack .ln .dn { margin: 0 4px; }
.tight { margin-left: 3px; padding-left: 4px; align-items: flex-start; position: relative; }
.tight::before { content: ""; position: absolute; left: 0; top: -2px; bottom: 12px; border-left: 1px solid #a9c3e4; }
.seg .hot { background: linear-gradient(#fbd9a4, #f7b85a 50%, #ffd985); }
.hotbtn { display: flex; align-items: center; gap: 4px; height: 22px; padding: 0 2px; border: 1px solid #c39246; border-radius: 3px; background: linear-gradient(#f9ce97, #f4b05a 50%, #fbd27a); white-space: nowrap; color: #3b4f78; }
.hotbtn .dn { margin: 0 2px; }
.pc { color: #222; font-size: 12px; } .comma { font-size: 18px; line-height: 8px; }
.seg .dec { display: flex; flex-direction: column; align-items: flex-end; justify-content: center; font: bold 8px/9px "Liberation Sans", sans-serif; color: #222; width: 20px; }
.dec b { color: #2e62b8; }
.styles .rb { padding-left: 0; }
.styles .big { width: 58px; }
.gallery { flex: 1; margin: 0 6px 16px 2px; padding: 3px 0 0 3px; display: grid; grid-template: 26px 26px / 104px 104px 104px auto; gap: 2px; border: 1px solid #b3cbe8; background: #d7e4f4; color: #000; position: relative; }
.gallery > button { margin: 1px 1px; background: #fff; padding-left: 4px; text-align: left; font: 13px/20px "Liberation Sans", "Noto Sans CJK SC", sans-serif; white-space: nowrap; }
.gallery > .s16 { font: 16px/20px "Liberation Serif", "Noto Sans CJK SC", serif; }
.gallery > .sel { margin: -1px -2px; padding-left: 6px; border: 2px solid #d69a45; border-bottom-color: #f0c050; box-shadow: inset 0 0 0 1px #f5dca8; }
.gs { grid-column: 4; grid-row: 1 / 3; display: grid; grid-template-rows: 1fr 1fr 1fr; margin: -3px 0 0 1px; }
.gs button { display: grid; place-items: center; border: 1px solid #abc4e6; background: #cfe0f4; }
.gs button:first-child { background: #e8ebef; }
.more { box-shadow: 0 -3px 0 -1px #4a6a9a; }

.cells .rb { padding-left: 2px; }

.fbar { flex: none; display: flex; align-items: center; height: 21px; margin-top: 0; border-top: 1px solid #5a7fae; border-bottom: 1px solid #5a7fae; background: #fff; }
.fbar input { border: 0; outline: 0; background: #fff; color: #000; height: 19px; padding: 0; }
.nbox { width: 145px; text-align: center; font: 14px "Liberation Mono", monospace; }
.fx { display: flex; align-items: center; justify-content: space-between; width: 76px; height: 19px; margin-left: 5px; padding: 0 4px 0 5px; border: 1px solid #93a9c8; border-left-color: #8ba6cc; border-top: 0; border-bottom: 0; border-radius: 10px 0 0 10px; background: linear-gradient(#e8f0fb, #bcd0ee); }
.fx i { width: 10px; height: 10px; border-radius: 50%; background: radial-gradient(#fff, #a9bbd8); }
.fx em { font: italic bold 15px "Liberation Serif", serif; color: #3a4658; }
.fx sub { font-size: 9px; vertical-align: -1px; }
.fin { flex: 1; min-width: 0; font: 14px "Noto Sans CJK SC", sans-serif; }
.fbar .fin { padding-left: 12px; }

/* worksheet */
.sheet { flex: 1; min-height: 0; overflow: hidden; border-top: 4px solid #d5e4f5; }
table { width: 1406px; table-layout: fixed; border-collapse: separate; border-spacing: 0; color: #000; }
.c0 { width: 35px; } .ca { width: 32px; } .cbb { width: 78px; } .cc { width: 130px; } .cd { width: 69px; } .cg { width: 111px; } .ci { width: 86px; } .cj { width: 50px; } .ck { width: 115px; } .cm { width: 72px; }
th { font: 16px/16px "Liberation Serif", serif; color: #22303f; padding: 0; }
thead th { height: 19px; border: solid #9eb6ce; border-width: 1px 1px 1px 0; border-top-color: #6d8fb8; background: linear-gradient(#f8fafd, #d3dce8); }
thead .act, tbody .act { background: #ffd58d; border-color: #f29536; }
thead .act { background: linear-gradient(#f8d48c, #f0be62); }
thead .corner { background: #a9c4e9; }
.corner i { display: block; width: 0; height: 0; margin: 2px 4px 0 auto; border: 6px solid; border-color: transparent #e8f0fa #e8f0fa transparent; }
tbody th { vertical-align: bottom; background: #e4ecf7; border: solid #9eb6ce; border-width: 0 1px 1px 0; }
td { padding: 0 2px 0 3px; border: solid #000; border-width: 0 1px 1px 0; vertical-align: middle; font: 13px/16px "Noto Sans CJK SC", sans-serif; text-spacing-trim: space-all; white-space: nowrap; overflow: hidden; }
td.a { border-right-width: 2px; border-bottom: 0; }
td.last { border-right-width: 2px; }
td.out { border: 0; }
td.mid { text-align: center; }
td.topv { vertical-align: top; }
td.pad { padding-top: 5px; }
td s { font: 12px/12px "Liberation Mono", monospace; text-decoration: inherit; }
td.big14, td.big14 s { font-size: 14px; }
td b { color: #f00; }
td.ar { font-family: "Liberation Sans", "Noto Sans CJK SC", sans-serif; }
.r { color: #d01414; }
.bl { color: #0e62b8; }
td.picked { position: relative; overflow: visible; }
td.picked::after { content: ""; position: absolute; inset: 0; border: 1px solid #000; box-shadow: 0 0 0 1px #fff, 0 0 0 2px #000; }
td.picked::before { content: ""; position: absolute; right: -3px; bottom: -3px; width: 6px; height: 6px; z-index: 1; background: #000; border: 1px solid #fff; }
.h21 { height: 21px; } .h23 { height: 23px; } .h45 { height: 45px; } .h60 { height: 60px; } .h73 { height: 73px; } .h74 { height: 74px; } .h75 { height: 75px; } .h76 { height: 76px; } .h81 { height: 81px; } .h88 { height: 88px; } .h112 { height: 112px; }
.arrow { position: absolute; left: 825px; top: 470px; }
```
